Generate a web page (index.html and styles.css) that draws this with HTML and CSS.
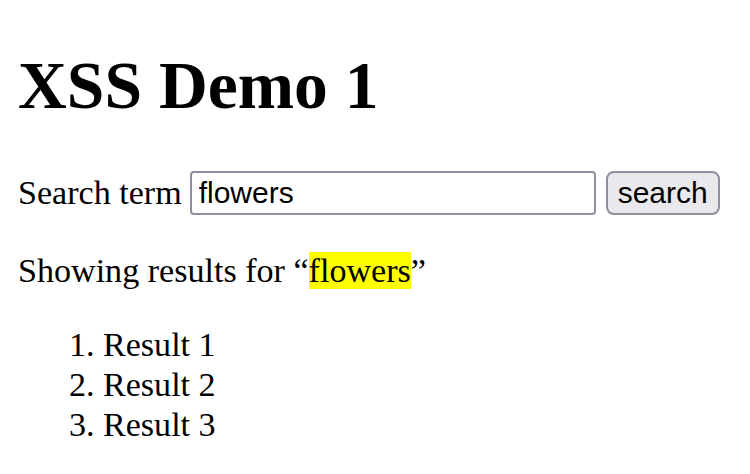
FILE: index.html
```html
<!DOCTYPE html>
<html>
<head>
<meta charset="utf-8">
<title>XSS Demo 1</title>
<link rel="stylesheet" href="styles.css">
</head>
<body>
<h1 class="title">XSS Demo 1</h1>
<form class="search-form">
<label class="label" for="q">Search term</label>
<input class="field" id="q" type="text" value="flowers">
<button class="btn" type="button">search</button>
</form>
<p class="summary">Showing results for “<span class="hl">flowers</span>”</p>
<ol class="results">
<li>Result 1</li>
<li>Result 2</li>
<li>Result 3</li>
</ol>
</body>
</html>
```

FILE: styles.css
```css
html, body {
  background: #fff;
}
body {
  margin: 17px 18px;
  font-family: "Liberation Serif", "Times New Roman", serif;
  font-size: 34.1px;
  line-height: 40px;
  color: #000;
}
.title {
  font-size: 67.6px;
  font-weight: bold;
  margin: 29px 0 45px;
  line-height: 80px;
}
.search-form {
  display: flex;
  align-items: center;
  gap: 8px;
  margin: 0 0 36px;
}
.field {
  box-sizing: border-box;
  width: 406px;
  height: 44px;
  margin: 0 2px 0 0;
  padding: 0 7px;
  border: 2px solid #8f8f9d;
  border-radius: 4px;
  font-family: "Liberation Sans", Arial, sans-serif;
  font-size: 30px;
  color: #000;
  background: #fff;
}
.btn {
  box-sizing: border-box;
  height: 44px;
  margin: 0;
  padding: 0 10px;
  border: 2px solid #8f8f9d;
  border-radius: 8px;
  background: #e9e9ed;
  font-family: "Liberation Sans", Arial, sans-serif;
  font-size: 30px;
  color: #000;
}
.summary {
  margin: 0 0 34px;
}
.hl {
  background: #ffff00;
}
.results {
  margin: 0;
  padding-left: 85px;
}
```
